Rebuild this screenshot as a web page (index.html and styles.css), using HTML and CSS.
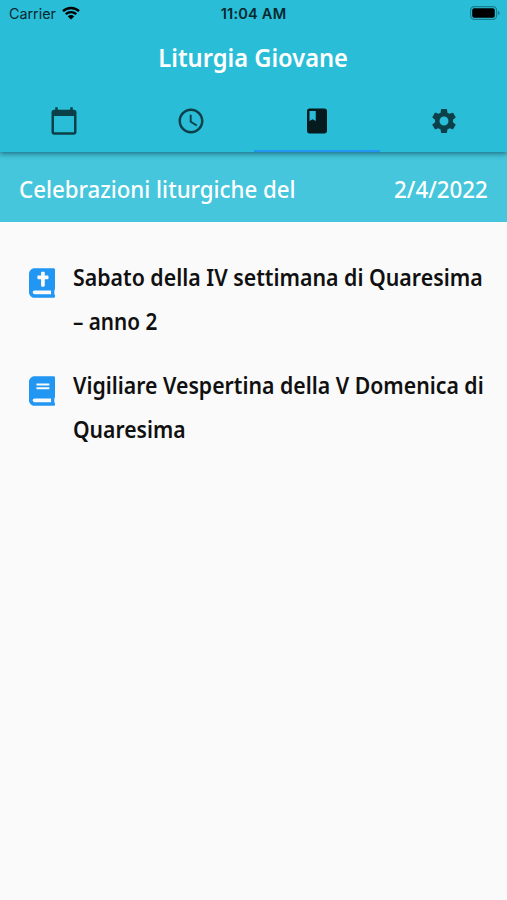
FILE: index.html
```html
<!DOCTYPE html>
<html lang="it">
<head>
<meta charset="utf-8">
<title>Liturgia Giovane</title>
<link rel="stylesheet" href="styles.css">
</head>
<body>
<header class="appbar">
  <div class="status">
    <div class="carrier"><span>Carrier</span>
      <svg class="wifi" viewBox="0 0 18 14"><path d="M1 5.2a11.6 11.6 0 0 1 16 0M3.8 8.2a7.5 7.5 0 0 1 10.4 0" fill="none" stroke="currentColor" stroke-width="2.4"/><path d="M9 13.6L5.8 10.4a4.6 4.6 0 0 1 6.4 0z" fill="currentColor"/></svg>
    </div>
    <div class="time">11:04 AM</div>
    <svg class="battery" viewBox="0 0 30 14"><rect x=".6" y=".6" width="26" height="12.8" rx="3.6" fill="none" stroke="#17808f" stroke-width="1.2"/><rect x="2.2" y="2.2" width="22.6" height="9.6" rx="2" fill="#000"/><path d="M28 4.7q1.7.8 1.7 2.3T28 9.3z" fill="#17808f"/></svg>
  </div>
  <h1 class="title"><span>Liturgia Giovane</span></h1>
  <nav class="tabs">
    <a class="tab"><svg viewBox="0 0 24 24"><path d="M20 3h-1V1h-2v2H7V1H5v2H4c-1.1 0-2 .9-2 2v16c0 1.1.9 2 2 2h16c1.1 0 2-.9 2-2V5c0-1.1-.9-2-2-2zm0 18H4V8h16v13z"/></svg></a>
    <a class="tab"><svg viewBox="0 0 24 24"><path d="M11.99 2C6.47 2 2 6.48 2 12s4.47 10 9.99 10C17.52 22 22 17.52 22 12S17.52 2 11.99 2zM12 20c-4.42 0-8-3.58-8-8s3.58-8 8-8 8 3.58 8 8-3.58 8-8 8zm.5-13H11v6l5.25 3.15.75-1.23-4.5-2.67z"/></svg></a>
    <a class="tab active"><svg viewBox="0 0 24 24"><path d="M18 2H6c-1.1 0-2 .9-2 2v16c0 1.1.9 2 2 2h12c1.1 0 2-.9 2-2V4c0-1.1-.9-2-2-2zM6 4h5v8l-2.5-1.5L6 12V4z"/></svg></a>
    <a class="tab"><svg viewBox="0 0 24 24"><path d="M19.14 12.94c.04-.3.06-.61.06-.94 0-.32-.02-.64-.07-.94l2.03-1.58c.18-.14.23-.41.12-.61l-1.92-3.32c-.12-.22-.37-.29-.59-.22l-2.39.96c-.5-.38-1.03-.7-1.62-.94l-.36-2.54c-.04-.24-.24-.41-.48-.41h-3.84c-.24 0-.43.17-.47.41l-.36 2.54c-.59.24-1.13.57-1.62.94l-2.39-.96c-.22-.08-.47 0-.59.22L2.74 8.87c-.12.21-.08.47.12.61l2.03 1.58c-.05.3-.09.63-.09.94s.02.64.07.94l-2.03 1.58c-.18.14-.23.41-.12.61l1.92 3.32c.12.22.37.29.59.22l2.39-.96c.5.38 1.03.7 1.62.94l.36 2.54c.05.24.24.41.48.41h3.84c.24 0 .44-.17.47-.41l.36-2.54c.59-.24 1.13-.56 1.62-.94l2.39.96c.22.08.47 0 .59-.22l1.92-3.32c.12-.22.07-.47-.12-.61l-2.01-1.58zM12 15.6c-1.98 0-3.6-1.62-3.6-3.6s1.62-3.6 3.6-3.6 3.6 1.62 3.6 3.6-1.62 3.6-3.6 3.6z"/></svg></a>
  </nav>
</header>
<section class="datebar"><span class="label">Celebrazioni liturgiche del</span><span class="date">2/4/2022</span></section>
<main class="list">
  <article class="item">
    <svg class="book" viewBox="0 0 448 512"><path fill-rule="evenodd" d="M448 360V24c0-13.3-10.7-24-24-24H96C43 0 0 43 0 96v320c0 53 43 96 96 96h328c13.3 0 24-10.7 24-24v-16c0-7.5-3.5-14.3-8.9-18.7-4.2-15.4-4.2-59.3 0-74.7 5.4-4.3 8.9-11.1 8.9-18.6zM144 144c0-8.8 7.2-16 16-16h48V80c0-8.8 7.2-16 16-16h32c8.8 0 16 7.2 16 16v48h48c8.8 0 16 7.2 16 16v32c0 8.8-7.2 16-16 16h-48v112c0 8.8-7.2 16-16 16h-32c-8.8 0-16-7.2-16-16V192h-48c-8.8 0-16-7.2-16-16zM381.4 448H96c-17.7 0-32-14.3-32-32s14.4-32 32-32h285.4c-1.9 17.1-1.9 46.9 0 64z"/></svg>
    <p class="text"><span class="l1">Sabato della IV settimana di Quaresima</span> <span class="l2">– anno 2</span></p>
  </article>
  <article class="item">
    <svg class="book" viewBox="0 0 448 512"><path fill-rule="evenodd" d="M448 360V24c0-13.3-10.7-24-24-24H96C43 0 0 43 0 96v320c0 53 43 96 96 96h328c13.3 0 24-10.7 24-24v-16c0-7.5-3.5-14.3-8.9-18.7-4.2-15.4-4.2-59.3 0-74.7 5.4-4.3 8.9-11.1 8.9-18.6zM128 134c0-3.3 2.7-6 6-6h212c3.3 0 6 2.7 6 6v20c0 3.3-2.7 6-6 6H134c-3.3 0-6-2.7-6-6zm0 64c0-3.3 2.7-6 6-6h212c3.3 0 6 2.7 6 6v20c0 3.3-2.7 6-6 6H134c-3.3 0-6-2.7-6-6zM381.4 448H96c-17.7 0-32-14.3-32-32s14.4-32 32-32h285.4c-1.9 17.1-1.9 46.9 0 64z"/></svg>
    <p class="text"><span class="l3">Vigiliare Vespertina della V Domenica di</span> <span class="l4">Quaresima</span></p>
  </article>
</main>
</body>
</html>
```
FILE: styles.css
```css
* { box-sizing: border-box; }
body { margin: 0; height: 900px; background: #fafafa; font-family: "Noto Sans", "Open Sans", sans-serif; color: #101010; overflow: hidden; }
.appbar { position: relative; z-index: 1; height: 152px; background: #2abdd7; box-shadow: 0 2px 5px rgba(0, 50, 65, .55); }
.status { height: 28px; padding: 0 7px 0 9px; display: grid; grid-template-columns: 1fr auto 1fr; align-items: center; font: 14.3px/28px Inter, sans-serif; color: #07282e; }
.carrier { display: flex; align-items: center; gap: 6px; }
.wifi { width: 18px; height: 14px; color: #000; margin-top: -2px; }
.time { font-weight: 600; font-size: 14.6px; margin-left: -2px; letter-spacing: .2px; }
.battery { justify-self: end; width: 30px; height: 14px; margin-top: -2px; }
.title { margin: 0; height: 60px; line-height: 58px; text-align: center; color: #fff; font-size: 26px; font-weight: 600; }
.title span, .text span, .datebar span { display: inline-block; white-space: nowrap; transform-origin: left center; }
.title span { transform: scaleX(.91); transform-origin: center; }
.tabs { height: 64px; display: grid; grid-template-columns: repeat(4, 1fr); }
.tab { display: flex; align-items: center; justify-content: center; padding: 4px 0 0 1px; border-bottom: 2px solid transparent; }
.tab svg { width: 30px; height: 30px; fill: #0b4049; }
.tab.active { border-color: #2196f3; }
.tab.active svg { fill: #061b1e; }
.datebar { height: 70px; padding: 2px 19px 0; display: flex; align-items: center; justify-content: space-between; background: #45c6dc; color: #fff; font-size: 24px; font-weight: 500; }
.datebar .label { transform: scaleX(.927); }
.datebar .date { transform: scaleX(.93); transform-origin: right center; }
.list { padding: 34px 20px 0 29px; }
.item { display: flex; height: 88px; margin-bottom: 19.5px; }
.book { flex: none; width: 26px; height: 30px; margin: 12px 18px 0 0; fill: #2196f3; }
.text { margin: -1px 0 0; line-height: 44px; font-size: 23px; font-weight: 600; display: flex; flex-direction: column; align-items: flex-start; }
.text .l1 { transform: scaleX(.927); }
.text .l2 { transform: scaleX(.9); }
.text .l3 { transform: scaleX(.924); }
.text .l4 { transform: scaleX(.918); }
```
